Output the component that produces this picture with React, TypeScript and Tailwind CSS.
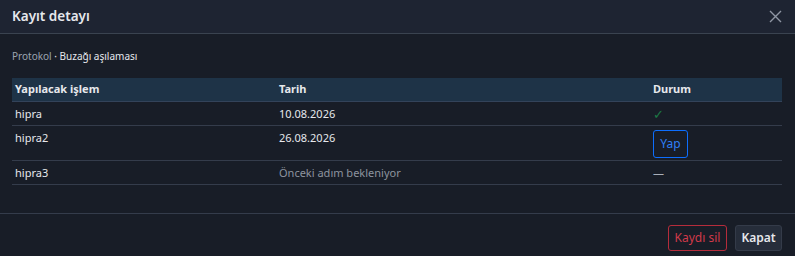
export default function App() {
  const rows = [
    { name: "hipra", date: "10.08.2026", status: "done" },
    { name: "hipra2", date: "26.08.2026", status: "action" },
    { name: "hipra3", date: "Önceki adım bekleniyor", status: "waiting" },
  ]

  return (
    <div className="w-[795px] h-[256px] bg-[#181d27] font-['Noto_Sans',sans-serif] flex flex-col">
      {/* Header */}
      <div className="h-[34px] shrink-0 bg-[#1e2432] border-b border-[#3a4350] flex items-center justify-between pl-3 pr-[13px]">
        <h2 className="text-[13.5px] font-semibold text-[#e6e8ec] leading-none">Kayıt detayı</h2>
        <svg width="13" height="13" viewBox="0 0 13 13" className="text-[#8f96a3]">
          <path d="M1 1 L12 12 M12 1 L1 12" stroke="currentColor" strokeWidth="1.4" />
        </svg>
      </div>

      {/* Body */}
      <div className="flex-1 pl-3 pr-[13px] pt-[15px]">
        <p className="text-[10px] leading-[14px] text-[#e6e8ec]">
          <span className="text-[#9ba3b0]">Protokol</span> · Buzağı aşılaması
        </p>

        <table className="mt-[15px] w-full border-collapse text-[11px] leading-[14px] text-[#e6e8ec] table-fixed">
          <thead>
            <tr className="bg-[#1e3347] border-b border-[#33435a]">
              <th className="w-[267px] text-left font-bold pl-[3px] h-[23px]">Yapılacak işlem</th>
              <th className="w-[374px] text-left font-bold">Tarih</th>
              <th className="text-left font-bold">Durum</th>
            </tr>
          </thead>
          <tbody>
            {rows.map((r) => (
              <tr key={r.name} className="border-b border-[#343c4b] align-top">
                <td className="pl-[3px] pt-[5px] pb-[4px]">{r.name}</td>
                <td className={`pt-[5px] ${r.status === "waiting" ? "text-[#8d949f]" : ""}`}>{r.date}</td>
                <td className="pt-[4px]">
                  {r.status === "done" && <span className="text-[#1c7a45] text-[13px] leading-[14px] block pt-px">✓</span>}
                  {r.status === "action" && (
                    <button className="block h-[28px] w-[35px] mb-[2px] rounded-[3px] border border-[#0d6efd] text-[#2f7ff5] text-[12px]">
                      Yap
                    </button>
                  )}
                  {r.status === "waiting" && <span className="text-[#a8aeb8] block pt-px">—</span>}
                </td>
              </tr>
            ))}
          </tbody>
        </table>
      </div>

      {/* Footer */}
      <div className="h-[43px] shrink-0 border-t border-[#343c4b] flex items-start justify-end gap-2 pt-[11px] pr-[13px]">
        <button className="h-[26px] w-[59px] rounded-[3px] border border-[#b52c3b] text-[#d03a4a] text-[12px]">
          Kaydı sil
        </button>
        <button className="h-[26px] w-[47px] rounded-[3px] border border-[#343b49] bg-[#262d3a] text-[#e6e8ec] text-[12px] font-semibold">
          Kapat
        </button>
      </div>
    </div>
  )
}
